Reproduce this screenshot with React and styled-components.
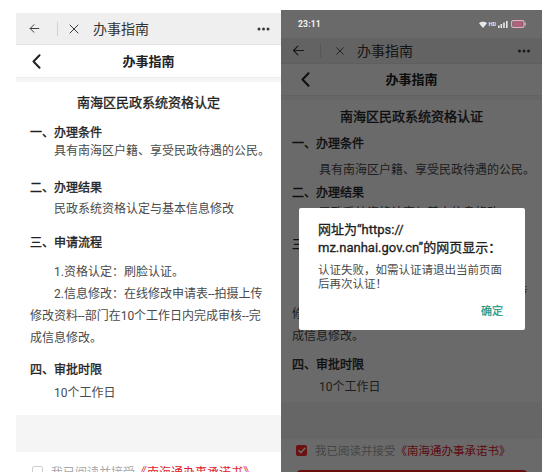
import React from "react";
import styled, { createGlobalStyle } from "styled-components";

const FONT = `Roboto, "Noto Sans CJK SC", "Noto Sans", sans-serif`;

const Global = createGlobalStyle`
  html, body { margin: 0; padding: 0; background: #fff; }
  body { font-family: ${FONT}; }
  * { box-sizing: border-box; }
`;

const Page = styled.div`
  width: 556px;
  height: 472px;
  overflow: hidden;
  display: flex;
  align-items: flex-start;
  background: #fff;
`;

const Phone = styled.div`
  position: relative;
  flex: none;
  width: ${(p) => p.$w}px;
  margin-left: ${(p) => p.$ml || 0}px;
  margin-top: ${(p) => p.$mt}px;
  height: ${(p) => 472 - p.$mt}px;
  background: #fff;
  display: flex;
  flex-direction: column;
  overflow: hidden;
`;

const StatusBar = styled.div`
  flex: none;
  height: 28px;
  display: flex;
  align-items: center;
  justify-content: space-between;
  padding: 0 16px 0 17px;
  background: #6a6a6a;
  color: #f2f2f2;
  position: relative;
  z-index: 3;
`;

const Clock = styled.span`
  font-size: 8.5px;
  font-weight: 700;
  letter-spacing: 0.2px;
`;

const StatusIcons = styled.span`
  display: flex;
  align-items: center;
  gap: 2px;
`;

const HdTag = styled.span`
  font-size: 5.5px;
  font-weight: 700;
  color: #e6e6e6;
`;

const TopBar = styled.div`
  flex: none;
  height: ${(p) => p.$h}px;
  display: flex;
  align-items: center;
  padding: 0 ${(p) => p.$pr}px 0 ${(p) => p.$pl}px;
  background: #efefef;
  border-bottom: 1px solid #e4e4e4;
  color: #333;
`;

const BarIcon = styled.span`
  display: inline-flex;
  flex: none;
  margin-left: ${(p) => p.$ml || 0}px;
  color: #3a3a3a;
`;

const BarDivider = styled.span`
  flex: none;
  width: 1px;
  height: ${(p) => p.$h}px;
  background: #d2d2d2;
  margin-left: ${(p) => p.$ml}px;
`;

const BarTitle = styled.span`
  flex: 1;
  margin-left: ${(p) => p.$ml}px;
  font-size: ${(p) => p.$fs}px;
  line-height: 1;
  color: #333;
`;

const NavBar = styled.div`
  flex: none;
  height: ${(p) => p.$h}px;
  display: grid;
  grid-template-columns: 1fr auto 1fr;
  align-items: center;
  background: #fff;
  border-bottom: 1px solid #ececec;
`;

const NavBack = styled.span`
  display: inline-flex;
  padding-left: ${(p) => p.$pl}px;
  color: #222;
`;

const NavTitle = styled.span`
  font-size: 13px;
  font-weight: 700;
  color: #222;
  line-height: 1;
`;

const Band = styled.div`
  flex: none;
  height: ${(p) => p.$h}px;
  margin-top: ${(p) => p.$mt || 0}px;
  background: #f5f5f5;
`;

const Content = styled.div`
  flex: none;
  padding: 0 ${(p) => p.$px}px;
`;

const DocTitle = styled.div`
  margin-top: ${(p) => p.$mt}px;
  text-align: center;
  font-size: 13px;
  font-weight: 400;
  -webkit-text-stroke: 0.35px #222;
  line-height: 20px;
  color: #222;
`;

const Heading = styled.div`
  margin-top: ${(p) => p.$mt}px;
  font-size: 12px;
  font-weight: 400;
  -webkit-text-stroke: 0.35px #222;
  line-height: 14px;
  color: #222;
`;

const Para = styled.div`
  margin-top: ${(p) => p.$mt}px;
  font-size: 12px;
  line-height: 22px;
  color: #4a4a4a;
  text-indent: ${(p) => p.$indent}px;
  white-space: nowrap;
`;

const AgreeRow = styled.div`
  flex: none;
  margin-top: ${(p) => p.$mt}px;
  padding-left: ${(p) => p.$pl}px;
  display: flex;
  align-items: center;
  gap: 8px;
  height: 20px;
  font-size: ${(p) => p.$fs}px;
  white-space: nowrap;
`;

const CheckBox = styled.span`
  flex: none;
  width: 11px;
  height: 11px;
  border-radius: 2px;
  display: inline-flex;
  align-items: center;
  justify-content: center;
  border: ${(p) => (p.$on ? "none" : "1px solid #cfcfcf")};
  background: ${(p) => (p.$on ? "#ff2a2a" : "#fff")};
`;

const AgreeText = styled.span`
  color: #a8a8a8;
`;

const AgreeLink = styled.span`
  color: #e0202a;
`;

const SubmitButton = styled.div`
  flex: none;
  margin: ${(p) => p.$mt}px 14px 0 15px;
  height: 40px;
  border-radius: 5px;
  background: #ff2020;
`;

const Overlay = styled.div`
  position: absolute;
  left: 0;
  right: 0;
  top: 28px;
  bottom: 0;
  background: rgba(0, 0, 0, 0.585);
  z-index: 1;
`;

const Dialog = styled.div`
  position: absolute;
  left: 18px;
  top: 198px;
  width: 226px;
  background: #fff;
  border-radius: 2px;
  padding: 13px 22px 10px 19px;
  z-index: 2;
  display: flex;
  flex-direction: column;
`;

const DialogTitle = styled.div`
  font-size: 13px;
  line-height: 18px;
  color: #1e1e1e;
  font-weight: 400;
  -webkit-text-stroke: 0.3px #1e1e1e;
`;

const DialogMessage = styled.div`
  margin-top: 6px;
  font-size: 11.5px;
  line-height: 14px;
  color: #4a4a4a;
`;

const DialogActions = styled.div`
  margin-top: 13px;
  display: flex;
  justify-content: flex-end;
`;

const DialogButton = styled.span`
  font-size: 11px;
  line-height: 16px;
  font-weight: 400;
  -webkit-text-stroke: 0.25px #1f9a88;
  color: #1f9a88;
`;

const ArrowLeft = ({ size }) => (
  <svg width={size} height={size} viewBox="0 0 24 24" fill="none" stroke="currentColor" strokeWidth="1.8" strokeLinecap="round" strokeLinejoin="round">
    <path d="M11 19l-7-7 7-7" />
    <path d="M20 12H4" />
  </svg>
);

const CloseIcon = ({ size }) => (
  <svg width={size} height={size} viewBox="0 0 24 24" fill="none" stroke="currentColor" strokeWidth="2" strokeLinecap="round">
    <path d="M4 4l16 16M20 4L4 20" />
  </svg>
);

const Dots = ({ w }) => (
  <svg width={w} height="4" viewBox="0 0 13 4" fill="currentColor">
    <circle cx="2" cy="2" r="1.5" />
    <circle cx="6.5" cy="2" r="1.5" />
    <circle cx="11" cy="2" r="1.5" />
  </svg>
);

const Chevron = () => (
  <svg width="9" height="15" viewBox="0 0 9 15" fill="none" stroke="currentColor" strokeWidth="2" strokeLinecap="round" strokeLinejoin="round">
    <path d="M7.5 1.2L1.5 7.5l6 6.3" />
  </svg>
);

const CheckMark = () => (
  <svg width="8" height="7" viewBox="0 0 8 7" fill="none" stroke="#fff" strokeWidth="1.5" strokeLinecap="round" strokeLinejoin="round">
    <path d="M1 3.6l2 2L7 1.2" />
  </svg>
);

const Wifi = () => (
  <svg width="8" height="7" viewBox="0 0 8 7" fill="#e8e8e8">
    <path d="M4 7L0 2.2C2.3 0.3 5.7 0.3 8 2.2z" />
  </svg>
);

const Signal = () => (
  <svg width="11" height="7" viewBox="0 0 11 7" fill="#e8e8e8">
    <rect x="0" y="4.5" width="1.6" height="2.5" />
    <rect x="2.5" y="3" width="1.6" height="4" />
    <rect x="5.2" y="1.5" width="1.6" height="5.5" />
    <rect x="8" y="0" width="1.6" height="7" />
  </svg>
);

const Battery = () => (
  <svg width="15" height="8" viewBox="0 0 15 8" fill="none">
    <rect x="0.6" y="0.6" width="12.4" height="6.8" rx="1.6" stroke="#f0a8c4" strokeWidth="1.2" />
    <rect x="2.3" y="2.3" width="9" height="3.4" rx="0.6" fill="#c35a7a" />
    <rect x="13.6" y="2.6" width="1.2" height="2.8" rx="0.4" fill="#f0a8c4" />
  </svg>
);

function BrowserBar({ h, pl, pr, arrow, divMl, closeMl, closeSize, titleMl, fs, dotsW }) {
  return (
    <TopBar $h={h} $pl={pl} $pr={pr}>
      <BarIcon>
        <ArrowLeft size={arrow} />
      </BarIcon>
      <BarDivider $h={14} $ml={divMl} />
      <BarIcon $ml={closeMl}>
        <CloseIcon size={closeSize} />
      </BarIcon>
      <BarTitle $ml={titleMl} $fs={fs}>办事指南</BarTitle>
      <BarIcon>
        <Dots w={dotsW} />
      </BarIcon>
    </TopBar>
  );
}

function Guide({ sp, title }) {
  return (
    <Content $px={sp.px}>
      <DocTitle $mt={sp.title}>{title}</DocTitle>
      <Heading $mt={sp.h1}>一、办理条件</Heading>
      <Para $mt={sp.p1} $indent={sp.indent}>具有南海区户籍、享受民政待遇的公民。</Para>
      <Heading $mt={sp.h2}>二、办理结果</Heading>
      <Para $mt={sp.p2} $indent={sp.indent}>民政系统资格认定与基本信息修改</Para>
      <Heading $mt={sp.h3}>三、申请流程</Heading>
      <Para $mt={sp.p3} $indent={sp.indent}>1.资格认定：刷脸认证。</Para>
      <Para $mt={0} $indent={sp.indent}>
        2.信息修改：在线修改申请表--拍摄上传
        <br />
        修改资料--部门在10个工作日内完成审核--完
        <br />
        成信息修改。
      </Para>
      <Heading $mt={sp.h4}>四、审批时限</Heading>
      <Para $mt={sp.p4} $indent={sp.indent}>10个工作日</Para>
    </Content>
  );
}

const leftSp = { px: 14, indent: 24, title: 11, h1: 13, p1: 0, h2: 19, p2: 3, h3: 16, p3: 11, h4: 14, p4: 5 };
const rightSp = { px: 11, indent: 27, title: 7, h1: 10, p1: 8, h2: 5, p2: 2, h3: 14, p3: 7, h4: 11, p4: 4 };

export default function App() {
  return (
    <>
      <Global />
      <Page>
        <Phone $w={265} $ml={16} $mt={13}>
          <BrowserBar h={32} pl={12} pr={11} arrow={13} divMl={16} closeMl={10} closeSize={12} titleMl={13} fs={14} dotsW={13} />
          <NavBar $h={33}>
            <NavBack $pl={16}>
              <Chevron />
            </NavBack>
            <NavTitle>办事指南</NavTitle>
            <span />
          </NavBar>
          <Band $h={4} />
          <Guide sp={leftSp} title="南海区民政系统资格认定" />
          <Band $h={37} $mt={11} />
          <AgreeRow $mt={9} $pl={16} $fs={12}>
            <CheckBox />
            <span>
              <AgreeText>我已阅读并接受</AgreeText>
              <AgreeLink>《南海通办事承诺书》</AgreeLink>
            </span>
          </AgreeRow>
        </Phone>

        <Phone $w={261} $mt={10}>
          <StatusBar>
            <Clock>23:11</Clock>
            <StatusIcons>
              <Wifi />
              <HdTag>HD</HdTag>
              <Signal />
              <Battery />
            </StatusIcons>
          </StatusBar>
          <BrowserBar h={26} pl={10} pr={11} arrow={15} divMl={14} closeMl={14} closeSize={10} titleMl={12} fs={14} dotsW={14} />
          <NavBar $h={32}>
            <NavBack $pl={20}>
              <Chevron />
            </NavBack>
            <NavTitle>办事指南</NavTitle>
            <span />
          </NavBar>
          <Band $h={4} />
          <Guide sp={rightSp} title="南海区民政系统资格认证" />
          <Band $h={37} $mt={4} />
          <AgreeRow $mt={1} $pl={15} $fs={11.5}>
            <CheckBox $on>
              <CheckMark />
            </CheckBox>
            <span>
              <AgreeText>我已阅读并接受</AgreeText>
              <AgreeLink>《南海通办事承诺书》</AgreeLink>
            </span>
          </AgreeRow>
          <SubmitButton $mt={10} />
          <Overlay />
          <Dialog>
            <DialogTitle>
              网址为“https://
              <br />
              mz.nanhai.gov.cn”的网页显示：
            </DialogTitle>
            <DialogMessage>
              认证失败，如需认证请退出当前页面
              <br />
              后再次认证！
            </DialogMessage>
            <DialogActions>
              <DialogButton>确定</DialogButton>
            </DialogActions>
          </Dialog>
        </Phone>
      </Page>
    </>
  );
}
